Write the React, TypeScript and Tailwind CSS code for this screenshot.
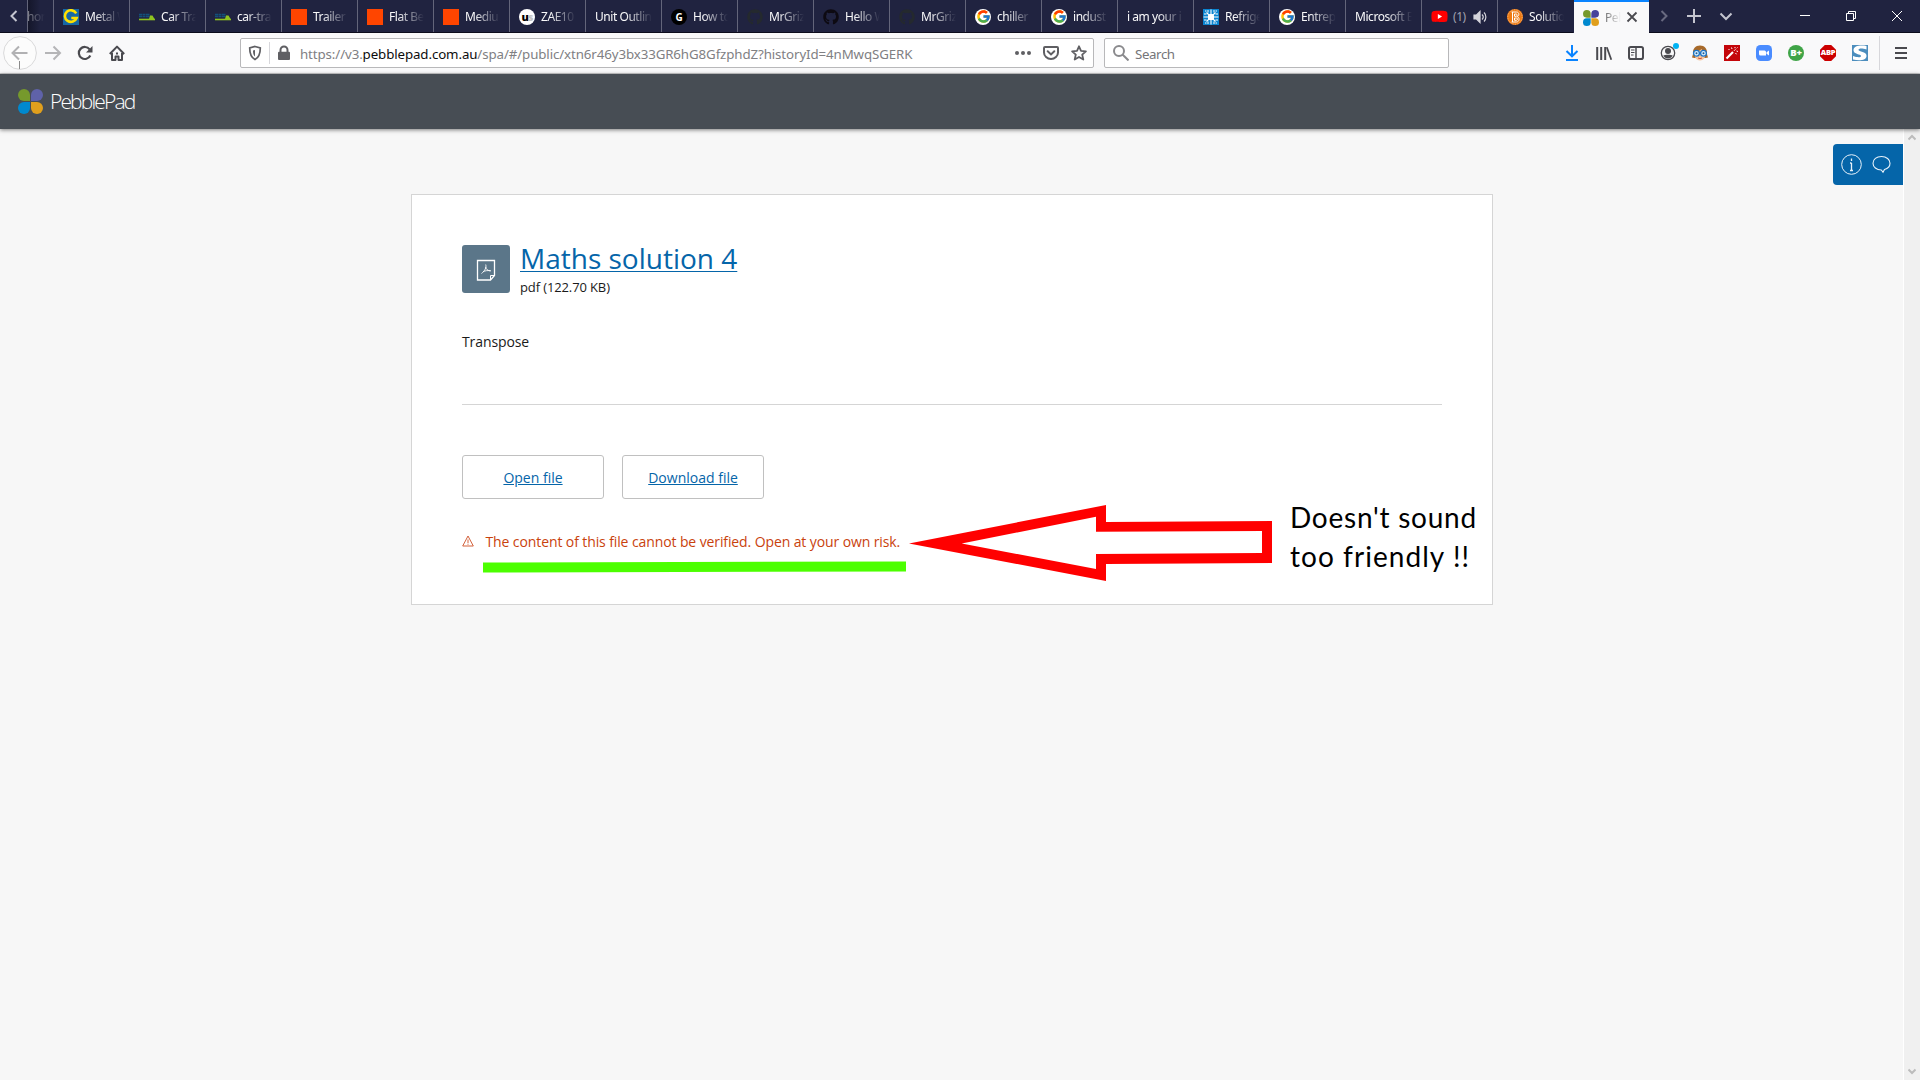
import React from "react";
import { FcGoogle } from "react-icons/fc";
import { FaGithub, FaYoutube } from "react-icons/fa";

const ui = "font-['Noto_Sans',sans-serif]";

function GIcon() {
  return (
    <svg width="16" height="16" viewBox="0 0 16 16" className="block">
      <rect width="16" height="16" fill="#1769a5" />
      <path d="M13.2 4.3A6 5.8 0 1 0 13.6 9H8.3" fill="none" stroke="#ffe000" strokeWidth="2.6" />
    </svg>
  );
}

function CarIcon() {
  return (
    <svg width="16" height="16" viewBox="0 0 16 16" className="block">
      <path d="M0 5.500h11M0 7.500h12" stroke="#12507a" strokeWidth="1.600" strokeDasharray="3 .5" />
      <path d="M0 10.500h16" stroke="#8fc31f" strokeWidth="1.600" />
      <path d="M10 10l1-3.500h2.500l2 3.500z" fill="#8fc31f" />
    </svg>
  );
}

const OrangeIcon = () => <div className="size-4 bg-[#ff4500]" />;

const UIcon = () => (
  <div className="flex size-4 items-center justify-center rounded-full bg-white font-['Open_Sans',sans-serif] text-[11px] font-extrabold leading-none tracking-[-1px] text-black">
    <span>u</span>
    <span className="text-[#c4c4c4]">s</span>
  </div>
);

const BlackG = () => (
  <div className="flex size-4 items-center justify-center rounded-full bg-black font-['Open_Sans',sans-serif] text-[10px] font-bold leading-none text-white">
    G
  </div>
);

const GoogleIcon = () => (
  <div className="flex size-4 items-center justify-center rounded-full bg-white">
    <FcGoogle size={15} />
  </div>
);

function SnowIcon() {
  return (
    <svg width="16" height="16" viewBox="0 0 16 16" className="block">
      <rect width="16" height="16" fill="#0a84d0" />
      <path
        d="M8 .5v15M.5 8h15M3.500 3.500l9 9M12.500 3.500l-9 9"
        stroke="#fff"
        strokeWidth="1.100"
      />
      <path
        d="M1 5h2.500M1 11h2.500M12.500 5H15M12.500 11H15M5 1v2.500M11 1v2.500M5 12.500V15M11 12.500V15M2 2h1.500M12.500 2H14M2 14h1.500M12.500 14H14"
        stroke="#fff"
      />
      <rect x="5" y="5" width="6" height="6" rx="1.500" fill="#fff" />
    </svg>
  );
}

function BitcoinishIcon() {
  return (
    <svg width="16" height="16" viewBox="0 0 16 16" className="block">
      <circle cx="8" cy="8" r="8" fill="#ee7a12" />
      <circle cx="8" cy="8" r="7.200" fill="none" stroke="#fbd0a5" strokeWidth=".6" strokeDasharray="1.500 1" />
      <path
        d="M4.500 3h5c3 0 3 4 .8 4.700C13 8.500 12.500 13 9.500 13h-5M5.500 3v10M7.500 5v2.300h1.700c1.300 0 1.300-2.300 0-2.300zM7.500 9v2.300h1.900c1.500 0 1.500-2.300 0-2.300z"
        fill="none"
        stroke="#fff"
        strokeWidth="1"
      />
    </svg>
  );
}

function Petals({ size, purple = "#5f62a9" }: { size: number; purple?: string }) {
  return (
    <svg width={size} height={size} viewBox="0 0 25 25" className="block shrink-0">
      <path d="M12 12H6A6 6 0 1 1 12 6z" fill="#76992c" />
      <path d="M13 12h6A6 6 0 1 0 13 6z" fill={purple} />
      <path d="M12 13H6a6 6 0 1 0 6 6z" fill="#0089cf" />
      <path d="M13 13h6a6 6 0 1 1-6 6z" fill="#e09f1d" />
    </svg>
  );
}

type TabData = { icon?: React.ReactNode; label: string };

const tabs: TabData[] = [
  { icon: <GIcon />, label: "Metal W" },
  { icon: <CarIcon />, label: "Car Tra" },
  { icon: <CarIcon />, label: "car-tra" },
  { icon: <OrangeIcon />, label: "Trailer" },
  { icon: <OrangeIcon />, label: "Flat Be" },
  { icon: <OrangeIcon />, label: "Mediu" },
  { icon: <UIcon />, label: "ZAE10" },
  { label: "Unit Outlin" },
  { icon: <BlackG />, label: "How to" },
  { icon: <FaGithub size={16} color="#24292e" />, label: "MrGriz" },
  { icon: <FaGithub size={16} color="#0d0a12" />, label: "Hello W" },
  { icon: <FaGithub size={16} color="#24292e" />, label: "MrGriz" },
  { icon: <GoogleIcon />, label: "chiller" },
  { icon: <GoogleIcon />, label: "indust" },
  { label: "i am your i" },
  { icon: <SnowIcon />, label: "Refrige" },
  { icon: <GoogleIcon />, label: "Entrep" },
  { label: "Microsoft E" },
];

function Tab({ icon, label }: TabData) {
  return (
    <div className="flex h-full w-[76px] shrink-0 items-center gap-1.5 border-l border-[#63657a] pl-[9px] pr-[5px] pt-px">
      {icon && <div className="w-4 shrink-0">{icon}</div>}
      <div className="min-w-0 flex-1 overflow-hidden whitespace-nowrap text-[12px] leading-4 tracking-[-0.45px] text-[#f9f9fa] [mask-image:linear-gradient(to_left,transparent_4px,black_30px)]">
        {label}
      </div>
    </div>
  );
}

function TabBar() {
  return (
    <div className={`flex h-[33px] items-center border-b border-[#0c0c1c] bg-[#202340] ${ui}`}>
      <div className="flex h-full w-[27px] shrink-0 items-center justify-center">
        <svg width="16" height="16" viewBox="0 0 16 16" fill="none" stroke="#c4c5cf" strokeWidth="2">
          <path d="M10.500 3L5.500 8l5 5" />
        </svg>
      </div>
      <div className="flex h-full w-[26px] shrink-0 items-center overflow-hidden border-l border-[#63657a] bg-linear-to-r from-[#14162a] to-[#202340] to-50% pt-px">
        <span className="-ml-px text-[12px] leading-4 tracking-[-0.45px] text-[#f9f9fa] opacity-50 [mask-image:linear-gradient(to_left,transparent,black)]">hor</span>
      </div>
      {tabs.map((t, i) => (
        <Tab key={i} {...t} />
      ))}
      <div className="flex h-full w-[76px] shrink-0 items-center gap-1.5 border-l border-[#63657a] pl-[9px] pt-px">
        <FaYoutube size={17} color="#ff0000" className="shrink-0 [background:linear-gradient(white,white)_center/6px_6px_no-repeat]" />
        <span className="-ml-px w-[14px] text-[12px] leading-4 tracking-[-0.45px] text-[#a0a1ae]">(1)</span>
        <svg width="15" height="14" viewBox="0 0 15 14" className="shrink-0" fill="none" stroke="#d5d5dc" strokeWidth="1.200">
          <path d="M1 5h2.500L7 1.500v11L3.500 9H1z" fill="#d5d5dc" />
          <path d="M9 4.500c1.500 1.500 1.500 3.500 0 5M11 2.500c2.500 2.500 2.500 6.500 0 9" />
        </svg>
      </div>
      <Tab icon={<BitcoinishIcon />} label="Solutio" />
      <div className="flex h-[33px] w-[76px] shrink-0 self-start border-l border-[#202340]">
        <div className="flex h-[33px] w-[75px] items-center border-t-2 border-[#0a84ff] bg-[#f9f9fa] pl-[9px]">
          <Petals size={16} purple="#47439a" />
          <span className="ml-1.5 w-4 overflow-hidden text-[12px] leading-4 tracking-[-0.45px] text-[#0c0c0d] [mask-image:linear-gradient(to_left,transparent,black_26px)]">Peb</span>
          <svg width="12" height="12" viewBox="0 0 12 12" className="-mt-px ml-[5px]" stroke="#4a4a4f" strokeWidth="1.800">
            <path d="M1.500 1.500l9 9M10.500 1.500l-9 9" />
          </svg>
        </div>
      </div>
      <svg width="16" height="16" viewBox="0 0 16 16" className="ml-[7px]" fill="none" stroke="#686a80" strokeWidth="2">
        <path d="M5.500 3l5 5-5 5" />
      </svg>
      <svg width="16" height="16" viewBox="0 0 16 16" className="ml-[14px]" stroke="#c4c5cf" strokeWidth="2">
        <path d="M8 1v14M1 8h14" />
      </svg>
      <svg width="16" height="16" viewBox="0 0 16 16" className="ml-4" fill="none" stroke="#c4c5cf" strokeWidth="2">
        <path d="M2.500 5.500L8 11l5.500-5.500" />
      </svg>
      <div className="ml-auto flex">
        <svg width="46" height="32" viewBox="0 0 46 32" fill="none" stroke="#fff">
          <path d="M18 15.500h10" />
        </svg>
        <svg width="46" height="32" viewBox="0 0 46 32" fill="none" stroke="#fff">
          <path d="M18.500 13.500h7v7h-7zM20.500 13v-1.500h7v7H26" />
        </svg>
        <svg width="46" height="32" viewBox="0 0 46 32" fill="none" stroke="#fff">
          <path d="M18 11l10 10M28 11L18 21" />
        </svg>
      </div>
    </div>
  );
}

function ToolIcon({ children }: { children: React.ReactNode }) {
  return (
    <svg width="16" height="16" viewBox="0 0 16 16" className="mx-2 block shrink-0 overflow-visible">
      {children}
    </svg>
  );
}

function NavBar() {
  return (
    <div className={`flex h-[41px] items-center border-b border-[#cccccd] bg-[#f9f9fa] ${ui}`}>
      <svg width="34" height="38" viewBox="0 0 34 38" className="ml-[3px] block">
        <circle cx="17" cy="19" r="16.400" fill="#fcfcfc" stroke="#d9d9da" />
        <path d="M24.500 19h-15M16 12.500L9.500 19l6.500 6.500" fill="none" stroke="#b1b1b3" strokeWidth="2" />
        <path d="M16.500 27v8" stroke="#8a8a8a" />
      </svg>
      <div className="flex">
        <ToolIcon>
          <path d="M0 8h14.500M8.500 1.500L15 8l-6.500 6.500" fill="none" stroke="#b5b5b7" strokeWidth="2" />
        </ToolIcon>
        <ToolIcon>
          <path d="M13.300 10.500A6 6 0 1 1 12.600 4.300" fill="none" stroke="#4a4a4f" strokeWidth="2.200" />
          <path d="M15.500 1v6.500H9z" fill="#4a4a4f" />
        </ToolIcon>
        <ToolIcon>
          <path d="M.8 9L8 1.600 15.200 9M3 8v7h3.500v-3.500h3V15H13V8" fill="none" stroke="#4a4a4f" strokeWidth="2" strokeLinejoin="round" />
          <path d="M7 7.500h2v2H7z" fill="#4a4a4f" />
        </ToolIcon>
      </div>
      <div className="ml-[107px] flex h-[30px] w-[854px] shrink-0 items-center rounded-[2px] border border-[#b8b8ba] bg-white">
        <svg width="16" height="16" viewBox="0 0 16 16" className="ml-1.5" fill="none" stroke="#5f5f63" strokeWidth="1.700">
          <path d="M8 1.500l5.300 1.400c0 5-.5 9-5.300 11.600C3.200 11.900 2.700 7.900 2.700 2.900z" />
          <path d="M8 5v6.500c-1.500-1.300-2-3-2-6z" fill="#5f5f63" stroke="none" />
        </svg>
        <div className="ml-[6px] h-[22px] w-px bg-[#d7d7db]" />
        <svg width="16" height="16" viewBox="0 0 16 16" className="ml-[6px]">
          <path d="M4.500 8V5a3.500 3.500 0 0 1 7 0v3" fill="none" stroke="#5f5f63" strokeWidth="2" />
          <rect x="2" y="6.700" width="12" height="8.300" rx="1" fill="#5f5f63" />
        </svg>
        <div className="ml-2 mt-px whitespace-nowrap text-[13.300px] leading-5 tracking-[-0.105px] text-[#808083]">
          https://v3.<span className="text-[#0c0c0d]">pebblepad.com.au</span>/spa/#/public/xtn6r46y3bx33GR6hG8GfzphdZ?historyId=4nMwqSGERK
        </div>
        <div className="ml-auto mr-[6px] flex gap-3">
          <svg width="16" height="16" viewBox="0 0 16 16" fill="#5f5f63">
            <circle cx="2" cy="8" r="2" />
            <circle cx="8" cy="8" r="2" />
            <circle cx="14" cy="8" r="2" />
          </svg>
          <svg width="16" height="16" viewBox="0 0 16 16" fill="none" stroke="#5f5f63" strokeWidth="2">
            <path d="M2 2h12a1 1 0 0 1 1 1v4.500a7 6.500 0 0 1-14 0V3a1 1 0 0 1 1-1z" />
            <path d="M4.700 6.300L8 9.400l3.300-3.100" strokeLinecap="round" />
          </svg>
          <svg width="16" height="16" viewBox="0 0 16 16" fill="none" stroke="#5f5f63" strokeWidth="1.800" strokeLinejoin="round">
            <path d="M8 1.300l2 4.500 4.900.5-3.700 3.300 1.100 4.900L8 12l-4.300 2.500 1.100-4.900L1.100 6.300 6 5.800z" />
          </svg>
        </div>
      </div>
      <div className="ml-[10px] flex h-[30px] w-[345px] shrink-0 items-center rounded-[2px] border border-[#b8b8ba] bg-white">
        <svg width="16" height="16" viewBox="0 0 16 16" className="ml-2" fill="none" stroke="#8a8a8d" strokeWidth="2">
          <circle cx="6" cy="6" r="5" />
          <path d="M9.500 9.500l6 6" />
        </svg>
        <span className="ml-[6px] mt-px text-[13.300px] leading-5 tracking-[-0.400px] text-[#757578]">Search</span>
      </div>
      <div className="ml-auto flex">
        <ToolIcon>
          <path d="M8 0v11M2.500 6L8 11.300 13.500 6M2 15h12" fill="none" stroke="#0a84ff" strokeWidth="2" />
        </ToolIcon>
        <ToolIcon>
          <path d="M2 2v13M6 2v13M10 2v13" transform="translate(-.8)" stroke="#4a4a4f" strokeWidth="2" />
          <path d="M10.800 2.300l4.500 12.500" stroke="#4a4a4f" strokeWidth="1.800" />
        </ToolIcon>
        <ToolIcon>
          <rect x="1" y="2" width="14" height="12" rx="1.800" fill="none" stroke="#4a4a4f" strokeWidth="2" />
          <path d="M8 2v12" stroke="#4a4a4f" strokeWidth="1.500" />
          <path d="M3 5h3.500M3 7.500h3.500M3 10h2.500" stroke="#4a4a4f" />
        </ToolIcon>
        <ToolIcon>
          <circle cx="8" cy="8" r="6.700" fill="none" stroke="#4a4a4f" strokeWidth="1.300" />
          <circle cx="8" cy="6" r="3" fill="#4a4a4f" />
          <path d="M3.300 10.500c1.500-1 8-1 9.400 0-1 2-2.700 3-4.700 3s-3.700-1-4.700-3z" fill="#4a4a4f" />
          <circle cx="16" cy="1" r="3" fill="#00b3f4" />
        </ToolIcon>
        <ToolIcon>
          <path d="M1 9C.5 3.500 3.500.5 8 .5s7.500 3 7 8.500l1 3.500-2.500.5h-11L0 12.500z" fill="#a86a2a" />
          <path d="M2.500 7c3 0 5-1 7-3 1 2 2.500 3 4 3 .5 5-2 8.500-5.500 8.500S2 12 2.500 7z" fill="#f6c79f" />
          <circle cx="4.500" cy="8.300" r="2.900" fill="#d8f0ff" stroke="#1b75c9" strokeWidth="1.300" />
          <circle cx="11.500" cy="8.300" r="2.900" fill="#d8f0ff" stroke="#1b75c9" strokeWidth="1.300" />
          <circle cx="4.500" cy="8.300" r="1" fill="#245a8a" />
          <circle cx="11.500" cy="8.300" r="1" fill="#245a8a" />
          <path d="M6 13q2 1.300 4 0" stroke="#d2553c" fill="none" />
        </ToolIcon>
        <ToolIcon>
          <rect width="16" height="16" fill="#c4060a" />
          <path d="M2.500 13.500L9 7" stroke="#fff" strokeWidth="2.200" />
          <path d="M10 5.800l1.500-1.500M7.500 2.500l.5 1.500M4.500 4l1 1M11 2v1.200M13.500 2.500l-.8.8M12.500 6l1.500.5M11.500 8l1 1.300" stroke="#fff" />
        </ToolIcon>
        <ToolIcon>
          <rect width="16" height="16" rx="4.500" fill="#4a8cff" />
          <path d="M3 5.500h5.500a1.500 1.500 0 0 1 1.500 1.500v3.500H4.500A1.500 1.500 0 0 1 3 9zM10.500 7.300L13 5.500v5l-2.500-1.800z" fill="#fff" />
        </ToolIcon>
        <div className="mx-2 flex size-4 items-center justify-center rounded-full bg-[#3fa447] font-['Open_Sans',sans-serif] text-[9.500px] font-extrabold leading-none tracking-[-0.3px] text-white">
          B+
        </div>
        <div className="mx-2 flex size-4 items-center justify-center bg-[#cc0000] font-['Open_Sans',sans-serif] text-[7.500px] font-extrabold leading-none tracking-[-0.3px] text-white [clip-path:polygon(30%_0,70%_0,100%_30%,100%_70%,70%_100%,30%_100%,0_70%,0_30%)]">
          ABP
        </div>
        <ToolIcon>
          <rect width="16" height="16" fill="#4b8dbd" />
          <path d="M14.500 1v3.500C10 3 6.500 3 6.500 5c0 1.800 8 1.500 8 5.700 0 4.800-7 5.300-13.500 3.800V11c4 1.500 8 1.700 8 0C9 9 1.500 9.500 1.500 5.300 1.500.6 8.500 0 14.500 1z" fill="#fff" />
        </ToolIcon>
      </div>
      <div className="ml-[3px] h-[34px] w-px bg-[#d7d7db]" />
      <svg width="12" height="12" viewBox="0 0 12 12" className="ml-[15px] mr-[13px]" stroke="#4a4a4f" strokeWidth="2">
        <path d="M0 1h12M0 6h12M0 11h12" />
      </svg>
    </div>
  );
}

function FileCard() {
  return (
    <div className="relative mt-[65px] ml-[411px] h-[411px] w-[1082px] border border-[#d5d5d5] bg-white px-[50px] pt-[50px] font-['Open_Sans',sans-serif] text-[14px] text-[#1a1a1a]">
      <div className="flex h-12 gap-[10px]">
        <div className="flex size-12 items-center justify-center rounded-[3px] bg-[#5b7689]">
          <svg width="20" height="23" viewBox="0 0 20 23" className="mt-[3px]" fill="none" stroke="#fff">
            <path d="M1.500 1.500h17v15l-4 4.500h-13z" strokeWidth="1.300" />
            <path d="M18.500 16.500h-4V21" />
            <path d="M9.700 5.500c1 3-1 6.500-4.200 9M9.700 8c.5 2.500 2.500 4 5 3.800M7 12.800c2-1.200 5-1.500 7.700-1" strokeWidth=".9" />
          </svg>
        </div>
        <div className="flex flex-col">
          <a className="-mt-[6px] text-[28px] leading-[38px] text-[#0565a9] underline decoration-1 underline-offset-[2px]">Maths solution 4</a>
          <span className="mt-px text-[13px] leading-[18px] tracking-[-0.12px]">pdf (122.70 KB)</span>
        </div>
      </div>
      <p className="mt-[39px] leading-5 tracking-[-0.1px]">Transpose</p>
      <div className="mt-[52px] h-px bg-[#d5d5d5]" />
      <div className="mt-[50px] flex gap-[18px] text-[#0565a9]">
        <a className="flex h-11 w-[142px] items-center justify-center rounded-[3px] border border-[#c0c0c0] underline">Open file</a>
        <a className="flex h-11 w-[142px] items-center justify-center rounded-[3px] border border-[#c0c0c0] underline">Download file</a>
      </div>
      <div className="mt-[33px] flex items-center text-[#c9420d]">
        <svg width="12" height="12" viewBox="0 0 12 12" fill="none" stroke="#d2603a" className="-mt-[3px]">
          <path d="M6 1L11.300 11H.7zM6 4.500V8M6 8.700v1" />
        </svg>
        <span className="ml-[11.5px] whitespace-nowrap leading-5 tracking-[-0.105px]">The content of this file cannot be verified. Open at your own risk.</span>
      </div>
      <svg width="1000" height="110" viewBox="480 495 1000 110" className="pointer-events-none absolute top-[300px] left-[68px]">
        <path d="M483 562.500L906 561.500V571.500L483 572.500z" fill="#4cff00" />
        <path
          fillRule="evenodd"
          fill="#ff0000"
          d="M909 543.500L1106 505V522L1272 521V563L1106 564V581zM961.700 543.500L1096 569V554L1262 553V531L1096 531.700V516.700z"
        />
      </svg>
      <div className="absolute top-[303px] left-[878px] whitespace-nowrap font-['Lato',sans-serif] text-[28px] leading-[39px] tracking-[0.75px] text-black">
        Doesn't sound
        <br />
        <span className="tracking-[1.050px]">too friendly !!</span>
      </div>
    </div>
  );
}

export default function App() {
  return (
    <div className="flex h-[1080px] w-[1920px] flex-col overflow-hidden bg-[#f7f7f7]">
      <TabBar />
      <NavBar />
      <header className="z-10 flex h-[55px] shrink-0 items-center bg-[#474d54] pl-[18px] shadow-[0_1px_4px_rgba(0,0,0,0.5)]">
        <Petals size={25} />
        <span className="ml-[7px] font-['Open_Sans',sans-serif] text-[21px] font-light leading-none tracking-[-1.850px] text-white">PebblePad</span>
      </header>
      <div className="flex min-h-0 flex-1">
        <main className="relative w-[1903px] shrink-0">
          <div className="absolute top-[15px] right-0 flex h-[41px] w-[70px] items-center gap-[10px] rounded-l-[4px] bg-[#0565a9] pl-2">
            <svg width="21" height="21" viewBox="0 0 21 21" fill="none" stroke="#e8f2fa">
              <circle cx="10.500" cy="10.500" r="9.800" />
              <path d="M10.500 9v8M10.500 4.500v2.500M9 9h1.500M9 16.500h3" strokeWidth="1.300" />
            </svg>
            <svg width="19" height="19" viewBox="0 0 19 19" fill="none" stroke="#e8f2fa" strokeWidth="1.100">
              <path d="M9.500 1.500c5 0 8.500 3 8.500 6.700 0 3-2 5.300-5.500 6.300L11 17.300 9.300 15C4.500 15 1 12 1 8.200S4.500 1.500 9.500 1.500z" />
            </svg>
          </div>
          <div className="flow-root">
            <FileCard />
          </div>
        </main>
        <div className="flex w-[17px] flex-col items-center justify-between border-l border-white bg-[#f0f0f0] py-[5px]">
          <svg width="8" height="7" viewBox="0 0 8 7" fill="none" stroke="#bcbcbc" strokeWidth="2">
            <path d="M.5 5.500L4 2l3.500 3.500" />
          </svg>
          <svg width="8" height="7" viewBox="0 0 8 7" fill="none" stroke="#bcbcbc" strokeWidth="2">
            <path d="M.5 1.500L4 5l3.500-3.500" />
          </svg>
        </div>
      </div>
    </div>
  );
}
